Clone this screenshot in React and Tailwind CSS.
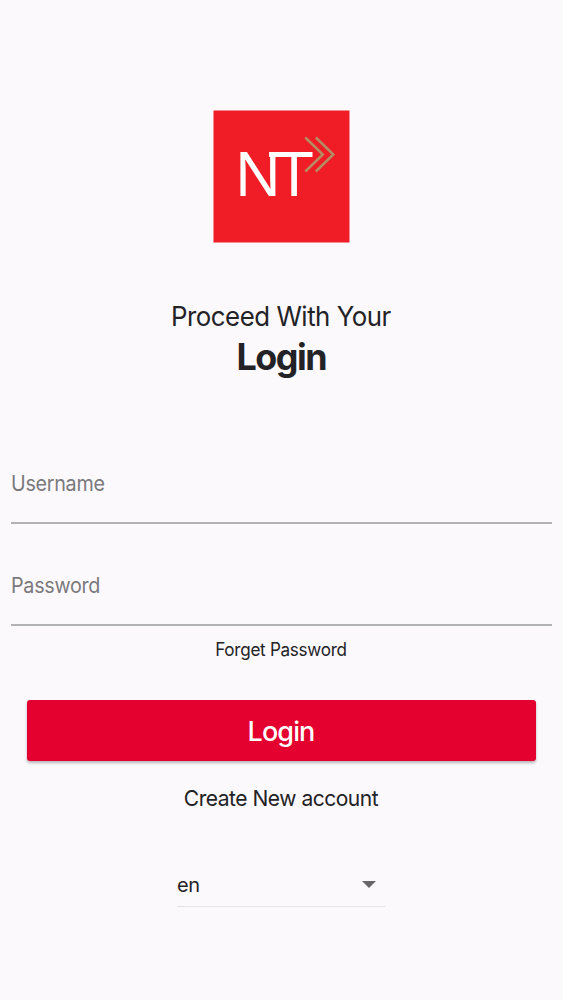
function Logo() {
  return (
    <svg className="block h-[133px] w-[137px]" viewBox="0 0 137 133" role="img" aria-label="NT">
      <rect x="0.5" y="0.5" width="136" height="132" fill="#f01c26" />
      <text x="21.5" y="86" fill="#fff" fontFamily="'Noto Sans', sans-serif" fontSize="61.6" letterSpacing="-4.2">NT</text>
      <path d="M56 42H99.5V47H56Z" fill="#fff" />
      <path d="M92.3 27.5L109.8 44.5L92.3 61.5M102.8 27.5L120.3 44.5L102.8 61.5" fill="none" stroke="#b58b62" strokeWidth="2.6" />
    </svg>
  );
}

function Field({ label, type }) {
  return (
    <label className="block h-[102px] border-b-2 border-[#b3b2b5] pt-[48px]">
      <input
        type={type}
        placeholder={label}
        className="block h-[28px] w-full origin-left scale-x-[0.94] bg-transparent text-[21px] tracking-[-0.3px] text-[#232226] outline-none placeholder:text-[#7b797d]"
      />
    </label>
  );
}

export default function App() {
  return (
    <main className="flex h-[1000px] w-full flex-col items-center bg-[#fbf9fc] pt-[110px] font-['Inter','Liberation_Sans',sans-serif] text-[#232226]">
      <Logo />
      <h1 className="mr-px mt-[55px] flex flex-col items-center whitespace-nowrap">
        <span className="h-[38px] scale-x-[0.957] text-[27px] leading-[38px] tracking-[-0.5px]">Proceed With Your</span>
        <span className="h-[42px] scale-x-[0.97] text-[37px] font-bold leading-[42px] tracking-[-1.5px]">Login</span>
      </h1>
      <form className="flex w-full flex-col px-[11px] pt-[44px]">
        <Field label="Username" type="text" />
        <Field label="Password" type="password" />
        <a className="mr-px mt-[12px] h-[24px] scale-x-[0.95] text-center text-[18px] leading-[24px] tracking-[-0.3px]">Forget Password</a>
        <button
          type="button"
          className="mx-4 mt-[38px] h-[61px] rounded-[3px] bg-[#e4002f] pr-px text-[27px] font-medium leading-[63px] tracking-[-0.9px] text-white shadow-[0_2px_3px_rgba(0,0,0,0.28)]"
        >
          Login
        </button>
        <a className="mr-px mt-[22px] h-[30px] scale-x-[0.955] text-center text-[22px] leading-[30px] tracking-[-0.5px]">Create New account</a>
      </form>
      <div className="mr-px mt-[56px] flex h-[38px] w-[208px] items-center justify-between border-b border-[#e5e3e7] pr-[9px] pb-[6px]">
        <span className="text-[20px] leading-[28px] tracking-[-0.3px]">en</span>
        <svg className="h-[7px] w-[14px]" viewBox="0 0 14 7">
          <path d="M0 0H14L7 7Z" fill="#676669" />
        </svg>
      </div>
    </main>
  );
}
